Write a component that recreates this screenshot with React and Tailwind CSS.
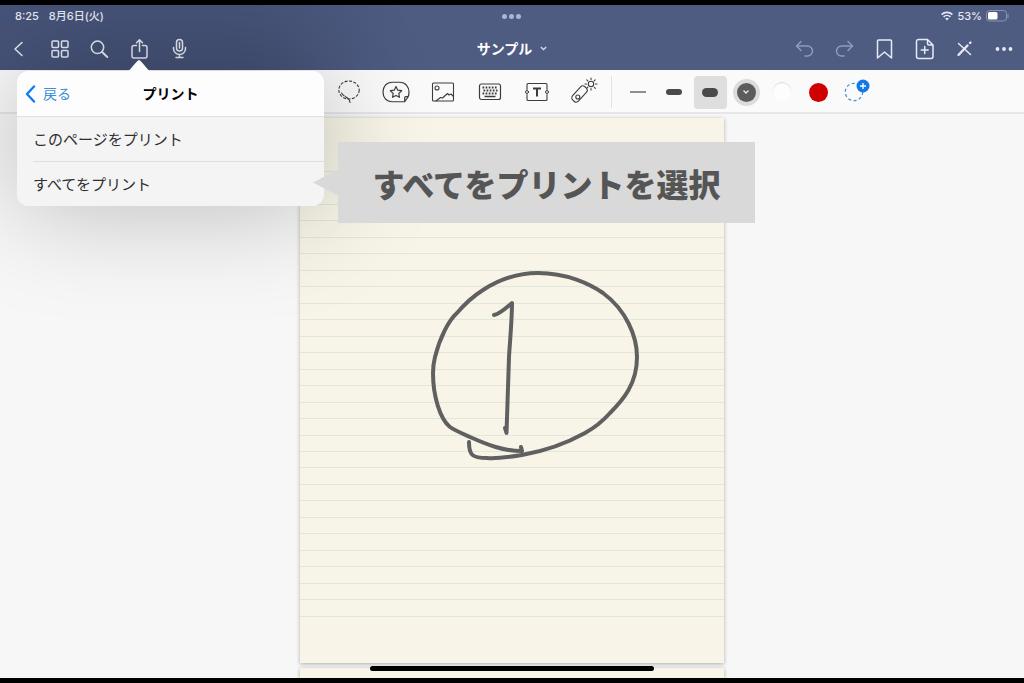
import React from "react";

const RULE_COUNT = 28;

function Icon({ size = 24, children, className = "" }) {
  return (
    <svg
      width={size}
      height={size}
      viewBox="0 0 24 24"
      fill="none"
      stroke="currentColor"
      strokeWidth="1.5"
      strokeLinecap="round"
      strokeLinejoin="round"
      className={className}
      aria-hidden="true"
    >
      {children}
    </svg>
  );
}

const leftActions = [
  { label: "戻る", icon: <path d="M14 5.500 7 12l7 6.500" /> },
  {
    label: "サムネイル",
    icon: (
      <>
        <rect x="4" y="4" width="6.5" height="6.5" rx="1" />
        <rect x="13.5" y="4" width="6.5" height="6.5" rx="1" />
        <rect x="4" y="13.5" width="6.5" height="6.5" rx="1" />
        <rect x="13.5" y="13.5" width="6.5" height="6.5" rx="1" />
      </>
    ),
  },
  {
    label: "検索",
    icon: (
      <>
        <circle cx="9.5" cy="10.3" r="6.2" />
        <path d="m14.100 15 5.2 5" strokeWidth="2" />
      </>
    ),
  },
  {
    label: "共有",
    icon: (
      <>
        <path d="M8.5 8.500H6a2 2 0 0 0-2 2v8.500a2 2 0 0 0 2 2h11a2 2 0 0 0 2-2v-8.500a2 2 0 0 0-2-2h-2.500" />
        <path d="M11.500 14.500V3M8.500 5.800l3-3 3 3" />
      </>
    ),
  },
  {
    label: "録音",
    icon: (
      <>
        <rect x="8.500" y="2.500" width="6" height="11.500" rx="3" />
        <path d="M5.500 10.500v1a6 6 0 0 0 12 0v-1M11.500 17.500v3M8 20.500h7M11.500 5.500v5.500" />
      </>
    ),
  },
];

const rightActions = [
  {
    label: "取り消す",
    dim: true,
    icon: <path d="M9 4.500 4.500 9 9 13.500M4.500 9h11a5 5 0 0 1 0 10H13" />,
  },
  {
    label: "やり直す",
    dim: true,
    icon: <path d="m16 4.500 4.500 4.500-4.500 4.500M20.500 9h-11a5 5 0 0 0 0 10H12" />,
  },
  {
    label: "ブックマーク",
    icon: <path d="M6.500 3h12a1 1 0 0 1 1 1v17l-7-6-7 6V4a1 1 0 0 1 1-1Z" />,
  },
  {
    label: "ページを追加",
    icon: (
      <>
        <path d="M15.500 2.500H6.500a2 2 0 0 0-2 2v15a2 2 0 0 0 2 2h12.500a2 2 0 0 0 2-2V8l-5.500-5.500ZM15.500 2.500V6.500a1.500 1.500 0 0 0 1.500 1.500h4" />
        <path d="M12.700 9.500v7M9.200 13h7" />
      </>
    ),
  },
  {
    label: "描画モード",
    icon: (
      <>
        <path d="M6.500 6.500 18.500 17.500" />
        <path d="M6.500 18 15.500 8.500" strokeWidth="2.400" />
        <path d="m18 6 .5-.5" strokeWidth="2.400" />
      </>
    ),
  },
  {
    label: "その他",
    icon: (
      <g fill="currentColor" stroke="none">
        <circle cx="5.500" cy="12" r="1.900" />
        <circle cx="12" cy="12" r="1.900" />
        <circle cx="18.500" cy="12" r="1.900" />
      </g>
    ),
  },
];

const tools = [
  {
    label: "なげなわ",
    icon: (
      <g strokeWidth="1.100">
        <ellipse cx="12" cy="10" rx="10.200" ry="9" strokeDasharray="3 1.500" strokeLinecap="butt" />
        <path d="M4.500 13c2.500 4.500 7.500 3.500 8.500 9.500" strokeDasharray="4 1.500" />
      </g>
    ),
  },
  {
    label: "エレメント",
    wide: true,
    icon: (
      <g strokeWidth="1.100">
        <path d="M20 21H8.500C3 21 0 17 0 12s3-9 8.500-9h7C21 3 24 7.500 24 12c0 1.800-.2 3-.7 4.200L20 21Zm0 0v-3.800a1 1 0 0 1 1-1h2.300" />
        <path d="m12 7 1.600 3.300 3.600.5-2.600 2.500.6 3.600-3.200-1.700-3.200 1.700.6-3.600-2.600-2.500 3.600-.5Z" />
      </g>
    ),
  },
  {
    label: "写真",
    icon: (
      <g strokeWidth="1.100">
        <rect x="1.500" y="3" width="21" height="18" rx="1" />
        <circle cx="6" cy="8" r="2" />
        <path d="m5 21 4.500-3.500 2 .5 5-4.500 1.500 1.500 2-1 2.500 2.500" />
      </g>
    ),
  },
  {
    label: "キーボード",
    icon: (
      <>
        <rect x="1.500" y="4" width="21" height="15.500" rx="2" strokeWidth="1.200" />
        <path
          d="M4.500 7.500h15M5.500 10.500h14M4.500 13.500h15"
          strokeWidth="1.800"
          strokeDasharray="1.700 1.400"
          strokeLinecap="butt"
        />
        <path d="M6.500 16.500h11" strokeLinecap="butt" />
      </>
    ),
  },
  {
    label: "テキスト",
    icon: (
      <>
        <path d="M2 9.500V4.500a1 1 0 0 1 1-1h18a1 1 0 0 1 1 1v5M2 14.500v5a1 1 0 0 0 1 1h18a1 1 0 0 0 1-1v-5" strokeWidth="1.100" />
        <circle cx="2" cy="12" r="1.500" strokeWidth="1" />
        <circle cx="22" cy="12" r="1.500" strokeWidth="1" />
        <path d="M8 8.500h8M12 8.500v8" strokeWidth="2" strokeLinecap="butt" />
      </>
    ),
  },
  {
    label: "レーザーポインタ",
    icon: (
      <g strokeWidth="1.100">
        <rect x="3.500" y="5" width="8" height="18" rx="3.200" transform="rotate(42 7.500 14)" />
        <circle cx="5.800" cy="17" r="2" />
        <circle cx="19" cy="4" r="2.700" />
        <path d="M19-2v1.500M19 8.500V10M13 4h1.500M23.500 4H25M14.800-.2l1 1M22.300 7.300l1 1M23.200-.2l-1 1M14.800 8.200l1-1" />
      </g>
    ),
  },
];

const printOptions = ["このページをプリント", "すべてをプリント"];

function StatusBar() {
  return (
    <div className="grid h-[22px] grid-cols-3 items-center px-[15px] font-['Inter','Noto_Sans_CJK_JP',sans-serif] text-[11px] font-medium">
      <div className="flex gap-[10px]">
        <span>8:25</span>
        <span>8月6日(火)</span>
      </div>
      <div className="flex justify-center gap-[2px]">
        <span className="size-[5px] rounded-full bg-[#a9b5d8]" />
        <span className="size-[5px] rounded-full bg-[#a9b5d8]" />
        <span className="size-[5px] rounded-full bg-[#a9b5d8]" />
      </div>
      <div className="flex items-center justify-end gap-1">
        <svg width="12" height="10" viewBox="0 0 12 10" fill="none" stroke="currentColor" strokeWidth="1.6">
          <path d="M.6 3.600a7.700 7.700 0 0 1 10.800 0M2.600 5.800a4.900 4.900 0 0 1 6.800 0" />
          <path d="M4.200 7.500a2.600 2.600 0 0 1 3.600 0L6 9.400Z" fill="currentColor" stroke="none" />
        </svg>
        <span>53%</span>
        <svg width="23" height="12" viewBox="0 0 23 12" fill="none">
          <rect x=".5" y=".5" width="20" height="10.500" rx="3" stroke="#8793b5" />
          <rect x="2" y="2" width="9.500" height="7.500" rx="1.500" fill="#fff" />
          <path d="M22 4v4" stroke="#8793b5" />
        </svg>
      </div>
    </div>
  );
}

function PrintPopover() {
  return (
    <div className="absolute top-[66px] left-[17px] z-10 w-[307px] rounded-xl text-black shadow-[0_0_110px_rgba(0,0,0,0.26)]">
      <svg className="absolute -top-[11px] left-[110px]" width="24" height="12" viewBox="0 0 24 12">
        <path d="M0 12C3 11 9 1 12 0c3 1 9 11 12 12Z" fill="#fdfdfd" />
      </svg>
      <div className="overflow-hidden rounded-xl bg-[#f4f4f4]">
        <div className="grid h-[45px] grid-cols-[1fr_auto_1fr] items-center bg-[#fdfdfd]">
          <button className="flex items-center gap-[7px] pl-2 text-[14px] text-[#3a8fd8]">
            <svg width="11" height="18" viewBox="0 0 11 18" fill="none" stroke="#0f7df0" strokeWidth="2.400" strokeLinecap="round" strokeLinejoin="round">
              <path d="M9 1.500 2 9l7 7.500" />
            </svg>
            戻る
          </button>
          <h2 className="text-[14px] font-bold">プリント</h2>
        </div>
        <ul className="border-t border-[#e0e0e0] pl-4">
          {printOptions.map((option, i) => (
            <li key={option} className={i > 0 ? "border-t border-[#dedede]" : ""}>
              <button className="h-[44px] w-full text-left text-[15px] text-[#2f2f2f]">{option}</button>
            </li>
          ))}
        </ul>
      </div>
    </div>
  );
}

function Header() {
  return (
    <header className="relative bg-linear-to-r from-[#465378] from-25% to-[#4e5c82] to-40% text-[#e6eaf4]">
      <StatusBar />
      <nav className="grid h-[43px] grid-cols-[1fr_auto_1fr] items-center">
        <div className="flex">
          {leftActions.map((action) => (
            <button key={action.label} aria-label={action.label} className="flex h-10 w-10 items-center justify-center">
              <Icon>{action.icon}</Icon>
            </button>
          ))}
        </div>
        <button className="flex items-center gap-2 text-[14px] font-bold text-white">
          サンプル
          <svg width="7" height="5" viewBox="0 0 7 5" fill="none" stroke="#d5daea" strokeWidth="1.400">
            <path d="m.8 1 2.700 2.500L6.200 1" />
          </svg>
        </button>
        <div className="flex justify-end">
          {rightActions.map((action) => (
            <button
              key={action.label}
              aria-label={action.label}
              className={`flex h-10 w-10 items-center justify-center ${action.dim ? "text-[#8f9bbd]" : ""}`}
            >
              <Icon>{action.icon}</Icon>
            </button>
          ))}
        </div>
      </nav>
      <PrintPopover />
    </header>
  );
}

function Toolbar() {
  return (
    <div className="flex h-[44px] items-center justify-center border-b-2 border-[#e6e6e6] bg-[#fafafa] pt-[2px] pl-[173px] text-[#3c3c3c]">
      {tools.map((tool) => (
        <button key={tool.label} aria-label={tool.label} className="flex h-9 w-[47px] items-center justify-center">
          <Icon size={tool.wide ? 26 : 24} className="overflow-visible">{tool.icon}</Icon>
        </button>
      ))}
      <span className="mr-2 ml-1 h-8 w-px bg-[#e2e2e2]" />
      <button aria-label="細い線" className="flex h-8 w-9 items-center justify-center">
        <span className="h-[2px] w-4 bg-[#8f8f8f]" />
      </button>
      <button aria-label="中くらいの線" className="flex h-8 w-9 items-center justify-center">
        <span className="h-[6px] w-4 rounded-full bg-[#4a4a4a]" />
      </button>
      <button aria-label="太い線" className="flex h-8 w-9 items-center justify-center">
        <span className="flex h-[33px] w-[33px] items-center justify-center rounded-sm bg-[#dedede]">
          <span className="h-[9px] w-4 rounded-full bg-[#4a4a4a]" />
        </span>
      </button>
      <button aria-label="グレー" className="flex h-8 w-9 items-center justify-center">
        <span className="flex size-[27px] items-center justify-center rounded-full bg-[#dcdcdc]">
          <span className="flex size-[19px] items-center justify-center rounded-full bg-[#5c5c5c]">
            <svg width="6" height="4" viewBox="0 0 6 4" fill="none" stroke="#e8e8e8" strokeWidth="1.300">
              <path d="m.5.500 2.500 2.500L5.500.5" />
            </svg>
          </span>
        </span>
      </button>
      <button aria-label="白" className="flex h-8 w-9 items-center justify-center">
        <span className="size-[18px] rounded-full bg-[#fdfdfd] shadow-[0_-1px_1px_#dcdcdc]" />
      </button>
      <button aria-label="赤" className="flex h-8 w-9 items-center justify-center">
        <span className="size-[19px] rounded-full bg-[#cf0000]" />
      </button>
      <button aria-label="色を追加" className="flex h-8 w-9 items-center justify-center">
        <svg width="20" height="20" viewBox="0 0 20 20" fill="none" className="overflow-visible">
          <circle cx="10" cy="10" r="8.700" stroke="#4a90d0" strokeWidth="1.300" strokeDasharray="3 2.500" />
          <circle cx="19" cy="4" r="6.500" fill="#1479e6" />
          <path d="M16 4h6M19 1v6" stroke="#fff" strokeWidth="1.300" />
        </svg>
      </button>
    </div>
  );
}

function NotePage() {
  return (
    <section className="relative bg-[#f8f5e8] pt-[53px] pb-[46px] shadow-[0_1px_4px_rgba(0,0,0,0.3)]">
      <div className="flex h-[446px] flex-col justify-between">
        {Array.from({ length: RULE_COUNT }, (_, i) => (
          <div key={i} className="h-px bg-[#e2e7dc]" />
        ))}
      </div>
      {/* handwriting */}
      <svg
        className="absolute top-[150px] left-[130px]"
        width="212"
        height="196"
        viewBox="0 0 212 196"
        fill="none"
        stroke="#606060"
        strokeWidth="4"
        strokeLinecap="round"
        strokeLinejoin="round"
      >
        <path d="M91 179 92 183C73 183 58 177 40 169C31 165 24 162 20 159C10 151 3 128 3 105C3 97 4 93 5 89C10 69 19 52 27 45C33 38 42 29 53 22C70 11 88 5 108 5C137 5 160 16 173 25C196 42 207 68 207 89C207 116 193 132 180 145C172 154 164 160 155 165C137 175 115 183 92 187C80 189 68 191 57 190C42 190 39 187 39 174" />
        <path d="M64 47C70 46 76 40 82 35C82 52 80 72 79 89L76.500 165 75 160" />
      </svg>
    </section>
  );
}

function Callout() {
  return (
    <aside className="absolute top-[137px] left-[338px] z-20 flex h-[81px] w-[417px] items-center justify-center bg-[#d9d9d9]">
      <svg className="absolute top-[27px] -left-[25px]" width="26" height="27" viewBox="0 0 26 27">
        <path d="M0 13.500 26 0v27Z" fill="#d9d9d9" />
      </svg>
      <p className="text-[32px] font-black whitespace-nowrap text-[#555]">すべてをプリントを選択</p>
    </aside>
  );
}

function App() {
  return (
    <div className="relative flex min-h-screen flex-col overflow-hidden border-y-[5px] border-black bg-[#f7f7f7] font-['Noto_Sans_CJK_JP',sans-serif]">
      <Header />
      <Toolbar />
      <main className="relative flex flex-1 flex-col overflow-hidden pt-1">
        <div className="mx-auto flex w-[424px] flex-1 flex-col gap-[5px]">
          <NotePage />
          <section className="min-h-[10px] flex-1 bg-[#f8f5e8] shadow-[0_1px_4px_rgba(0,0,0,0.3)]" />
        </div>
        <div className="absolute inset-x-0 bottom-[7px] mx-auto h-[5px] w-[284px] rounded-full bg-black" />
      </main>
      <Callout />
    </div>
  );
}

export default App;
